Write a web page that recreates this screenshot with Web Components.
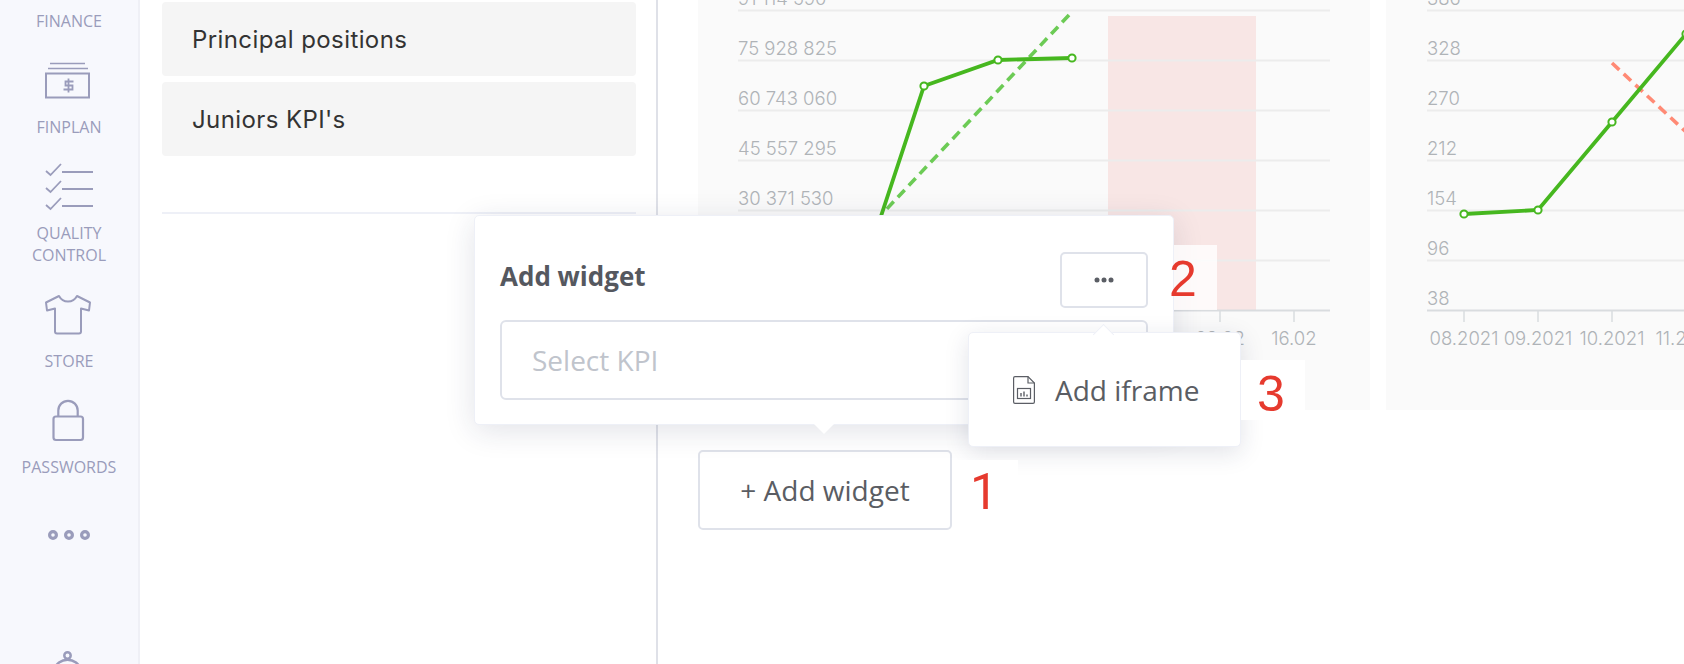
<!DOCTYPE html>
<html lang="en"><head><meta charset="utf-8"><title>Add widget</title>
<style>
html,body{margin:0;padding:0;background:#fff}
body{font-family:"Open Sans",sans-serif}
</style></head>
<body>
<app-shell>
  <side-bar slot="side">
    <nav-item label="FINANCE" bare></nav-item>
    <nav-item label="FINPLAN"><svg viewBox="20 0 98 50" width="98" height="50" fill="none" stroke="#9a9cbb" stroke-width="2"><path d="M50 3.5H85M48 8.5H88" stroke-width="1.6"/><rect x="46" y="13.5" width="43" height="24"/><path d="M73.5 21.5H65.5V25.5H72.5V29.5H63.5M68.5 18.5V32.5" stroke-width="1.8"/></svg></nav-item>
    <nav-item label="QUALITY<br>CONTROL"><svg viewBox="20 0 98 50" width="98" height="50" fill="none" stroke="#9a9cbb" stroke-width="1.8" overflow="visible"><path d="M46 5L50.5 9L61 -2M46 22L50.5 26L61 15M46 39L50.5 43L61 32"/><path d="M62 6H93M62 23H93M62 40H93" stroke-width="2"/></svg></nav-item>
    <nav-item label="STORE"><svg viewBox="20 0 98 50" width="98" height="50" fill="none" stroke="#9a9cbb" stroke-width="2" stroke-linejoin="round"><path d="M59 2L46 8.500L47 16.500L55 14.500V37.500Q55 39.500 57 39.500H79Q81 39.500 81 37.500V14.500L89 16.500L90 8.500L77 2Q74 7.500 68 7.500Q62 7.500 59 2Z"/></svg></nav-item>
    <nav-item label="PASSWORDS"><svg viewBox="20 0 98 50" width="98" height="50" fill="none" stroke="#9a9cbb" stroke-width="2.200" overflow="visible"><path d="M58.300 17V10.500A9.700 9.700 0 0 1 77.700 10.500V17"/><rect x="53.500" y="16.500" width="29.500" height="23.500" rx="2.500"/></svg></nav-item>
    <nav-item label="&nbsp;"><svg viewBox="20 0 98 50" width="98" height="50" fill="none" stroke="#9a9cbb" stroke-width="3.200"><circle cx="53" cy="29" r="3.400"/><circle cx="69" cy="29" r="3.400"/><circle cx="85" cy="29" r="3.400"/></svg></nav-item>
    <nav-item label=""><svg viewBox="20 0 98 50" width="98" height="50" fill="none" stroke="#9a9cbb" stroke-width="2.500" overflow="visible"><circle cx="67.500" cy="43.500" r="3.200"/><path d="M54 58A14 14 0 0 1 81 58"/></svg></nav-item>
  </side-bar>
  <left-panel slot="left">
    <kpi-card>Principal positions</kpi-card>
    <kpi-card>Juniors KPI's</kpi-card>
  </left-panel>
  <chart-card slot="chart" origin="698" wide="672"
    ylabels='["91 114 590","75 928 825","60 743 060","45 557 295","30 371 530","15 185 765","0"]'
    xlabels='[[1072,"07.02"],[1146,"08.02"],[1220,"09.02"],[1294,"16.02"]]'
    ylabelx="738" plotend="1330"
    band="1108,16,148,294"
    dash='{"color":"#6ccb55","pts":"1069,15 883,213"}'
    line="850,310 924,86 998,60 1072,58" dots="924,86 998,60 1072,58"></chart-card>
  <chart-card slot="chart" origin="1386" wide="672"
    ylabels='["386","328","270","212","154","96","38"]'
    xlabels='[[1464,"08.2021"],[1538,"09.2021"],[1612,"10.2021"],[1686,"11.2021"]]'
    ylabelx="1427" plotend="1700"
    dash='{"color":"#ff8a75","pts":"1612,63 1700,145"}'
    line="1464,214 1538,210 1612,122 1686,34" dots="1464,214 1538,210 1612,122 1686,34"></chart-card>
  <ghost-button slot="action">+ Add widget</ghost-button>

  <note-number slot="overlay" n="1" style="left:953px;top:460px;width:65px;height:66px;--tx:17px;--ty:7px;--ff:Roboto" ></note-number>
  <add-popover slot="overlay"></add-popover>
  <note-number slot="overlay" n="2" style="left:1174px;top:245px;width:43px;height:65px;--tx:-5px;--ty:9px;--bg:rgba(255,255,255,.8)"></note-number>
  <iframe-menu slot="overlay"></iframe-menu>
  <note-number slot="overlay" n="3" style="left:1241px;top:360px;width:64px;height:60px;--tx:16px;--ty:9px"></note-number>
</app-shell>

<template id="t-shell"><style>
:host{display:block;position:relative;width:1684px;height:664px;overflow:hidden;background:#fff}
.row{display:flex;height:100%}
.main{flex:1;min-width:0;padding-left:40px;display:flex;flex-direction:column;gap:40px;overflow:hidden}
.charts{display:flex;gap:16px}
.act{display:flex}
</style>
<div class="row"><slot name="side"></slot><slot name="left"></slot>
<div class="main"><div class="charts"><slot name="chart"></slot></div><div class="act"><slot name="action"></slot></div></div></div>
<slot name="overlay"></slot></template>

<template id="t-side"><style>
:host{display:flex;flex:none;flex-direction:column;gap:28px;box-sizing:border-box;width:140px;height:664px;padding-top:10px;background:#f7f8fd;border-right:2px solid #eff0f6;overflow:hidden}
</style><slot></slot></template>

<template id="t-nav"><style>
:host{display:flex;flex-direction:column;align-items:center;gap:6px;font:16px/22px "Open Sans",sans-serif;color:#9a9cbb;text-align:center}
.i{display:block;height:50px;width:98px}
:host([bare]) .i{display:none}
.l:empty{display:none}
::slotted(svg){display:block}
</style><div class="i"><slot></slot></div><div class="l"></div></template>

<template id="t-left"><style>
:host{display:block;flex:none;box-sizing:border-box;width:518px;height:664px;padding:2px 20px 0 22px;border-right:2px solid #dfe1e8}
.list{display:flex;flex-direction:column;gap:6px}
hr{border:0;height:2px;margin:56px 0 0;background:#eef0f7}
</style><div class="list"><slot></slot></div><hr></template>

<template id="t-card"><style>
:host{display:flex;align-items:center;height:74px;box-sizing:border-box;padding-left:30px;background:#f5f5f5;border-radius:4px;font:24px Inter,sans-serif;letter-spacing:.4px;color:#333}
</style><slot></slot></template>

<template id="t-ghost"><style>
:host{display:flex;align-items:center;justify-content:center;box-sizing:border-box;width:254px;height:80px;border:2px solid #dfe2ea;border-radius:5px;font:28px "Open Sans",sans-serif;color:#5a5d63;background:#fff}
</style><slot></slot></template>

<template id="t-pop"><style>
:host{position:absolute;left:474px;top:215px;width:700px;height:210px;box-sizing:border-box;padding:36px 25px 0 25px;background:#fff;border:1px solid #eef0f7;border-radius:5px;box-shadow:0 6px 30px rgba(30,40,80,.13);display:flex;flex-direction:column;gap:12px}
.head{display:flex;justify-content:space-between;align-items:center}
h2{margin:0 0 9px;font:700 26px "Open Sans",sans-serif;color:#55585f}
.more{box-sizing:border-box;width:88px;height:56px;border:2px solid #dfe2ea;border-radius:5px;display:flex;align-items:center;justify-content:center}
.sel{box-sizing:border-box;height:80px;border:2px solid #dfe2ea;border-radius:6px;padding-left:30px;display:flex;align-items:center;font:28px "Open Sans",sans-serif;color:#c0c4cc}
.tip{position:absolute;left:339px;top:208px;width:0;height:0;border:10px solid transparent;border-top-color:#fff;border-bottom:0}
</style><div class="head"><h2>Add widget</h2><div class="more"><svg width="24" height="6" viewBox="0 0 24 6" fill="#5b5e65"><circle cx="5" cy="3" r="2.500"/><circle cx="12" cy="3" r="2.500"/><circle cx="19" cy="3" r="2.500"/></svg></div></div>
<div class="sel">Select KPI</div><div class="tip"></div></template>

<template id="t-menu"><style>
:host{position:absolute;left:968px;top:332px;width:273px;height:115px;box-sizing:border-box;padding-left:44px;background:#fff;border:1px solid #eef0f7;border-radius:5px;box-shadow:0 6px 24px rgba(30,40,80,.13);display:flex;align-items:center;gap:20px;font:28px "Open Sans",sans-serif;color:#5a5d63}
svg{display:block}
.tip{position:absolute;left:127px;top:-6px;width:14px;height:14px;background:#fff;border-left:1px solid #eef0f7;border-top:1px solid #eef0f7;transform:rotate(45deg)}
</style><div class="tip"></div><svg width="22" height="28" viewBox="0 0 22 28" fill="none" stroke="#5b5e65" stroke-width="1.200"><path d="M2 .6H15L21.400 7V26Q21.400 27.400 20 27.400H2Q.6 27.400 .6 26V2Q.6 .6 2 .6Z"/><path d="M15 .6V7H21.400"/><rect x="4.500" y="12.500" width="13" height="10"/><path d="M8 20.500V17M11 20.500V15.500M14 20.500V18.500" stroke-width="1.400"/></svg><span>Add iframe</span></template>

<script>
const mount=(el,id)=>{const r=el.attachShadow({mode:'open'});r.appendChild(document.getElementById(id).content.cloneNode(true));return r};
class AppShell extends HTMLElement{constructor(){super();mount(this,'t-shell')}}
class SideBar extends HTMLElement{constructor(){super();mount(this,'t-side')}}
class NavItem extends HTMLElement{constructor(){super();mount(this,'t-nav')}
 connectedCallback(){this.shadowRoot.querySelector('.l').innerHTML=this.getAttribute('label')||''}}
class LeftPanel extends HTMLElement{constructor(){super();mount(this,'t-left')}}
class KpiCard extends HTMLElement{constructor(){super();mount(this,'t-card')}}
class GhostButton extends HTMLElement{constructor(){super();mount(this,'t-ghost')}}
class AddPopover extends HTMLElement{constructor(){super();mount(this,'t-pop')}}
class IframeMenu extends HTMLElement{constructor(){super();mount(this,'t-menu')}}
class NoteNumber extends HTMLElement{constructor(){super();const r=this.attachShadow({mode:'open'});
 r.innerHTML=`<style>:host{position:absolute;display:block;background:var(--bg,#fff);z-index:1}
 span{position:absolute;left:var(--tx,0);top:var(--ty,0);font:50px/50px var(--ff,"Liberation Sans"),sans-serif;color:#e63a2e}</style><span></span>`}
 connectedCallback(){this.shadowRoot.querySelector('span').textContent=this.getAttribute('n')}}
class ChartCard extends HTMLElement{constructor(){super();this.attachShadow({mode:'open'})}
 connectedCallback(){
  const a=n=>this.getAttribute(n),ox=+a('origin'),w=+a('wide'),end=+a('plotend'),lx=+a('ylabelx');
  const ys=JSON.parse(a('ylabels')),xs=JSON.parse(a('xlabels')),grid=[10,60,110,160,210,260];
  let s='';
  if(a('band')){const[b,c,d,e]=a('band').split(',');s+=`<rect x="${b}" y="${c}" width="${d}" height="${e}" fill="#f0655a" fill-opacity=".13"/>`}
  grid.forEach((g,i)=>{s+=`<path d="M${lx} ${g+.5}H${end}" stroke="#ececec" stroke-width="2"/><text x="${lx}" y="${g-5}">${ys[i]}</text>`});
  s+=`<path d="M${lx} 310.500H${end}" stroke="#d9dcdf" stroke-width="2"/><text x="${lx}" y="305">${ys[6]}</text>`;
  xs.forEach(([x,t])=>{s+=`<path d="M${x} 311V322" stroke="#d9dcdf" stroke-width="1.500"/><text x="${x}" y="345" text-anchor="middle">${t}</text>`});
  const d=JSON.parse(a('dash'));
  s+=`<polyline points="${d.pts}" fill="none" stroke="${d.color}" stroke-width="3.600" stroke-dasharray="10 6"/>`;
  s+=`<polyline points="${a('line')}" fill="none" stroke="#46b71f" stroke-width="3.800"/>`;
  a('dots').split(' ').forEach(p=>{const[x,y]=p.split(',');s+=`<circle cx="${x}" cy="${y}" r="3.600" fill="#fff" stroke="#46b71f" stroke-width="2"/>`});
  this.shadowRoot.innerHTML=`<style>:host{display:block;flex:none;width:${w}px;height:410px;background:#fafafa;overflow:hidden}
  svg{display:block}text{font:300 18.500px Inter,sans-serif;fill:#afb3b7}</style>
  <svg width="${w}" height="410" viewBox="${ox} 0 ${w} 410">${s}</svg>`;
 }}
[['app-shell',AppShell],['side-bar',SideBar],['nav-item',NavItem],['left-panel',LeftPanel],['kpi-card',KpiCard],['ghost-button',GhostButton],['add-popover',AddPopover],['iframe-menu',IframeMenu],['note-number',NoteNumber],['chart-card',ChartCard]].forEach(([n,c])=>customElements.define(n,c));
</script>
</body></html>
